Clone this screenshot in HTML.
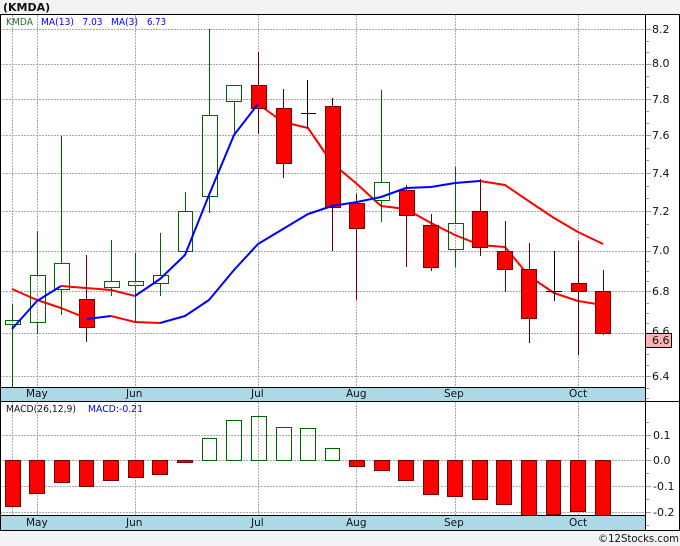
<!DOCTYPE html>
<html><head><meta charset="utf-8"><style>
html,body{margin:0;padding:0;background:#f3f3f3;width:680px;height:546px;overflow:hidden}
svg{display:block}
text{font-family:"DejaVu Sans","Liberation Sans",sans-serif;font-size:11px;fill:#111}
.s{font-size:9.5px}
.b{fill:#00f}
.gr path{fill:none}
</style></head><body>
<svg width="680" height="546" viewBox="0 0 680 546" xmlns="http://www.w3.org/2000/svg" shape-rendering="crispEdges">
<rect x="0" y="0" width="680" height="546" fill="#f3f3f3"/>
<rect x="0" y="14" width="680" height="516" fill="#fff"/>
<text x="3" y="11" style="font-weight:bold;font-size:11px" fill="#111">(KMDA)</text>

<!-- grid -->
<g stroke="#aaa" stroke-width="1" stroke-dasharray="2 1" fill="none">
<path d="M0 29.5H645M0 64.5H645M0 99.5H645M0 135.5H645M0 173.5H645M0 211.5H645M0 251.5H645M0 291.5H645M0 333.5H645M0 376.5H645"/>
<path d="M12.5 15V387M37.5 15V387M135.5 15V387M258.5 15V387M356.5 15V387M455.5 15V387M578.5 15V387"/>
<path d="M0 435.5H645M0 460.5H645M0 486.5H645M0 512.5H645"/>
<path d="M12.5 402V515M37.5 402V515M135.5 402V515M258.5 402V515M356.5 402V515M455.5 402V515M578.5 402V515"/>
</g>
<!-- ticks -->
<g stroke="#999" stroke-width="1" fill="none">
<path d="M645 29.5h6M645 64.5h6M645 99.5h6M645 135.5h6M645 173.5h6M645 211.5h6M645 251.5h6M645 291.5h6M645 376.5h6M645 435.5h6M645 460.5h6M645 486.5h6M645 512.5h6"/>
<path d="M645 41.5h4M645 52.5h4M645 76.5h4M645 87.5h4M645 111.5h4M645 123.5h4M645 148.5h4M645 160.5h4M645 186.5h4M645 198.5h4M645 224.5h4M645 237.5h4M645 261.5h4M645 271.5h4M645 281.5h4M645 303.5h4M645 313.5h4M645 323.5h4M645 354.5h4M645 365.5h4M645 388.5h4M645 398.5h4M645 422.5h4M645 448.5h4M645 473.5h4M645 499.5h4M645 525.5h4"/>
</g>

<!-- declining MA segments, behind candles -->
<g fill="none" stroke="#f00" stroke-width="2" stroke-linejoin="round" shape-rendering="auto">
<path d="M12 289L37 300L61 308L86 318"/>
<path d="M111 316L135 322L160 323"/>
<path d="M480 181L505 185L530 202L554 218L578 232L603 244"/>
<path d="M61 286L86 288L111 290L135 296"/>
<path d="M258 104L283 122L308 128L332 163L357 184L381 206L406 209L431 223L455 235L480 245L505 247L529 276L554 293L578 301L603 305"/>
</g>

<!-- green candles -->
<g stroke="#060" stroke-width="1" fill="none">
<path d="M12.5 304V320M12.5 325V387M37.5 231V275M37.5 323V334M61.5 136V263M61.5 290V315M111.5 240V281M111.5 288V296M135.5 253V281M135.5 286V322M160.5 233V275M160.5 284V296M185.5 192V211M209.5 29V115M209.5 197V213M234.5 102V133M381.5 90V182M381.5 201V222M455.5 167V223M455.5 250V267"/>
<rect x="5.5" y="320.5" width="15" height="4"/>
<rect x="30.5" y="275.5" width="15" height="47"/>
<rect x="54.5" y="263.5" width="15" height="26"/>
<rect x="104.5" y="281.5" width="15" height="6"/>
<rect x="128.5" y="281.5" width="15" height="4"/>
<rect x="153.5" y="275.5" width="15" height="8"/>
<rect x="178.5" y="211.5" width="14" height="40"/>
<rect x="202.5" y="115.5" width="15" height="81"/>
<rect x="226.5" y="85.5" width="15" height="16"/>
<rect x="374.5" y="182.5" width="15" height="18"/>
<rect x="448.5" y="223.5" width="15" height="26"/>
</g>
<!-- black doji -->
<g stroke="#000" stroke-width="1" fill="none">
<path d="M307.5 80V128M301 113.5H316M554.5 251V301M546 291.5H562"/>
</g>
<!-- red candles -->
<g stroke="#600" stroke-width="1" fill="#f00">
<path d="M86.5 255V342M258.5 52V134M283.5 89V178M332.5 98V251M356.5 194V300M406.5 185V267M431.5 214V271M480.5 179V256M505.5 221V292M529.5 243V343M578.5 241V355M603.5 270V335" fill="none"/>
<rect x="79.5" y="299.5" width="15" height="28" stroke="#700"/>
<rect x="251.5" y="85.5" width="15" height="23" stroke="#700"/>
<rect x="276.5" y="108.5" width="15" height="55" stroke="#700"/>
<rect x="325.5" y="106.5" width="15" height="101" stroke="#700"/>
<rect x="349.5" y="203.5" width="15" height="25" stroke="#700"/>
<rect x="399.5" y="190.5" width="15" height="25" stroke="#700"/>
<rect x="423.5" y="225.5" width="15" height="42" stroke="#700"/>
<rect x="472.5" y="211.5" width="15" height="36" stroke="#700"/>
<rect x="497.5" y="251.5" width="15" height="18" stroke="#700"/>
<rect x="521.5" y="269.5" width="15" height="49" stroke="#700"/>
<rect x="571.5" y="283.5" width="15" height="8" stroke="#700"/>
<rect x="595.5" y="291.5" width="15" height="42" stroke="#700"/>
</g>

<!-- rising MA segments, on top -->
<g fill="none" stroke="#00f" stroke-width="2" stroke-linejoin="round" shape-rendering="auto">
<path d="M12 329L37 301L61 286"/>
<path d="M135 296L160 279L185 255L209 195L234 135L258 104"/>
<path d="M87 319L111 316"/>
<path d="M160 323L185 316L209 300L234 270L258 244L283 229L308 214L332 206L357 202L381 197L406 188L431 187L455 183L480 181"/>
</g>

<!-- bands -->
<rect x="0" y="388" width="645" height="13" fill="#add8e6"/>
<rect x="0" y="516" width="645" height="14" fill="#add8e6"/>

<!-- MACD bars -->
<g stroke="#700" stroke-width="1" fill="#f00">
<rect x="5.5" y="460.5" width="15" height="46"/>
<rect x="29.5" y="460.5" width="15" height="33"/>
<rect x="54.5" y="460.5" width="15" height="22"/>
<rect x="79.5" y="460.5" width="14" height="26"/>
<rect x="103.5" y="460.5" width="15" height="20"/>
<rect x="128.5" y="460.5" width="15" height="17"/>
<rect x="152.5" y="460.5" width="15" height="14"/>
<rect x="177.5" y="460.5" width="15" height="2"/>
<rect x="349.5" y="460.5" width="15" height="6"/>
<rect x="374.5" y="460.5" width="15" height="10"/>
<rect x="398.5" y="460.5" width="15" height="20"/>
<rect x="423.5" y="460.5" width="15" height="34"/>
<rect x="447.5" y="460.5" width="15" height="36"/>
<rect x="472.5" y="460.5" width="15" height="39"/>
<rect x="496.5" y="460.5" width="15" height="44"/>
<rect x="521.5" y="460.5" width="15" height="55"/>
<rect x="546.5" y="460.5" width="14" height="54"/>
<rect x="570.5" y="460.5" width="15" height="51"/>
<rect x="595.5" y="460.5" width="15" height="55"/>
</g>
<g stroke="#060" stroke-width="1" fill="none">
<rect x="202.5" y="438.5" width="14" height="22"/>
<rect x="226.5" y="420.5" width="15" height="40"/>
<rect x="251.5" y="416.5" width="15" height="44"/>
<rect x="276.5" y="427.5" width="15" height="33"/>
<rect x="300.5" y="428.5" width="15" height="32"/>
<rect x="325.5" y="448.5" width="14" height="12"/>
</g>

<!-- frame lines -->
<g stroke="#000" stroke-width="1" fill="none">
<path d="M0 14.5H680M0 387.5H645M0 401.5H680M0 515.5H645M0 530.5H680M0.5 14V530M645.5 14V530M679.5 14V530"/>
</g>

<!-- labels -->
<text class="s" x="6" y="25" style="fill:#2b6b2b" textLength="27" lengthAdjust="spacingAndGlyphs">KMDA</text>
<text class="s b" x="41" y="25" style="fill:#00f" textLength="33" lengthAdjust="spacingAndGlyphs">MA(13)</text>
<text class="s b" x="82.5" y="25" style="fill:#00f" textLength="20" lengthAdjust="spacingAndGlyphs">7.03</text>
<text class="s b" x="111" y="25" style="fill:#00f" textLength="27" lengthAdjust="spacingAndGlyphs">MA(3)</text>
<text class="s b" x="147" y="25" style="fill:#00f" textLength="19" lengthAdjust="spacingAndGlyphs">6.73</text>
<text class="s" x="6" y="412" textLength="70" lengthAdjust="spacingAndGlyphs">MACD(26,12,9)</text>
<text class="s b" x="88" y="412" style="fill:#00f" textLength="55" lengthAdjust="spacingAndGlyphs">MACD:-0.21</text>

<g style="font-size:10.5px">
<text x="26" y="397" style="font-size:10.5px">May</text>
<text x="126" y="397" style="font-size:10.5px">Jun</text>
<text x="251" y="397" style="font-size:10.5px">Jul</text>
<text x="346" y="397" style="font-size:10.5px">Aug</text>
<text x="444" y="397" style="font-size:10.5px">Sep</text>
<text x="569" y="397" style="font-size:10.5px">Oct</text>
<text x="26" y="526" style="font-size:10.5px">May</text>
<text x="126" y="526" style="font-size:10.5px">Jun</text>
<text x="251" y="526" style="font-size:10.5px">Jul</text>
<text x="346" y="526" style="font-size:10.5px">Aug</text>
<text x="444" y="526" style="font-size:10.5px">Sep</text>
<text x="569" y="526" style="font-size:10.5px">Oct</text>
</g>

<text x="652" y="33">8.2</text>
<text x="652" y="67">8.0</text>
<text x="652" y="103">7.8</text>
<text x="652" y="139">7.6</text>
<text x="652" y="177">7.4</text>
<text x="652" y="215">7.2</text>
<text x="652" y="254">7.0</text>
<text x="652" y="295">6.8</text>
<text x="652" y="335">6.6</text>
<text x="652" y="380">6.4</text>

<rect x="645.5" y="333.5" width="26" height="14" fill="#ffb3b3" stroke="#000"/>
<text x="652" y="344">6.6</text>

<text x="653" y="439">0.1</text>
<text x="653" y="464">0.0</text>
<text x="653" y="490">-0.1</text>
<text x="653" y="516">-0.2</text>

<text x="598" y="542" style="font-size:11px" textLength="81" lengthAdjust="spacingAndGlyphs">©12Stocks.com</text>
</svg>
</body></html>
